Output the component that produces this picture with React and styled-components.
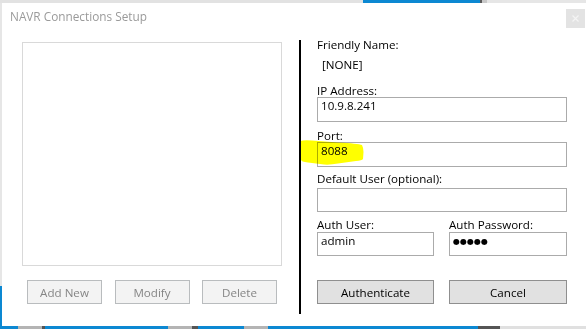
import React from "react";
import styled, { createGlobalStyle } from "styled-components";

const Global = createGlobalStyle`
  html, body { margin: 0; padding: 0; background: #e4e4e4; }
  body { font-family: "Segoe UI", "Open Sans", "Noto Sans", sans-serif; }
`;

const Desktop = styled.div`
  width: 586px;
  height: 329px;
  display: grid;
  grid-template-columns: 2px 584px;
  grid-template-rows: 3px 323px 3px;
  overflow: hidden;
  background: #e4e4e4;
`;

const Strip = styled.div`
  grid-column: 1 / span 2;
  display: flex;
  background: ${(p) => p.$bg};
`;

const Seg = styled.div`
  width: ${(p) => p.$w}px;
  flex: ${(p) => (p.$grow ? 1 : "none")};
  background: ${(p) => p.$c};
`;

const SideStrip = styled.div`
  display: flex;
  flex-direction: column;
  background: #e6e6e6;
`;

const SideBlue = styled.div`
  margin-top: auto;
  height: 40px;
  background: #0c88d2;
`;

const Window = styled.div`
  background: #ffffff;
  display: flex;
  flex-direction: column;
  font-size: 11.6px;
  color: #000;
`;

const TitleBar = styled.div`
  height: 34px;
  display: flex;
  align-items: flex-start;
  justify-content: space-between;
`;

const Title = styled.div`
  padding: 5px 0 0 8px;
  line-height: 16px;
  font-size: 11.8px;
  color: #9a9a9a;
`;

const CloseBtn = styled.div`
  width: 19px;
  height: 19px;
  margin: 6px 1px 0 0;
  background: #e3e3e3;
  display: flex;
  align-items: center;
  justify-content: center;
`;

const Body = styled.div`
  display: flex;
  padding-left: 20px;
`;

const LeftPanel = styled.div`
  width: 260px;
  display: flex;
  flex-direction: column;
  padding-top: 5px;
`;

const ListBox = styled.div`
  height: 224px;
  box-sizing: border-box;
  border: 1px solid #d9d9d9;
  background: #fff;
`;

const ButtonRow = styled.div`
  margin-top: 14px;
  padding: 0 5px;
  display: flex;
  justify-content: space-between;
`;

const Button = styled.div`
  width: ${(p) => p.$w || 75}px;
  height: 24px;
  box-sizing: border-box;
  display: flex;
  align-items: center;
  justify-content: center;
  border: 1px solid ${(p) => (p.$disabled ? "#b9bcbe" : "#8f8f8f")};
  background: ${(p) => (p.$disabled ? "#f3f3f3" : "#e1e1e1")};
  color: ${(p) => (p.$disabled ? "#858585" : "#000")};
`;

const Divider = styled.div`
  width: 2px;
  height: 274px;
  margin: 3px 0 0 17px;
  background: #000;
`;

const RightColumn = styled.div`
  width: 250px;
  margin-left: 16px;
  display: flex;
  flex-direction: column;
`;

const Label = styled.div`
  line-height: 14px;
  height: 14px;
  white-space: nowrap;
  margin-top: ${(p) => p.$mt || 0}px;
  padding-left: ${(p) => p.$pl || 0}px;
  position: relative;
  top: 1px;
`;

const Field = styled.div`
  position: relative;
  margin-top: ${(p) => p.$mt || 0}px;
`;

const TextBox = styled.div`
  height: ${(p) => p.$h || 25}px;
  box-sizing: border-box;
  border: 1px solid #ababab;
  background: #fff;
  padding: 0 3px;
  line-height: 15px;
  white-space: nowrap;
  overflow: hidden;
`;

const Dots = styled.span`
  font-family: "DejaVu Sans", sans-serif;
  font-size: 8px;
  line-height: 15px;
  vertical-align: top;
  position: relative;
  top: 1px;
`;

const AuthGrid = styled.div`
  display: grid;
  grid-template-columns: 117px 118px;
  column-gap: 15px;
  margin-top: ${(p) => p.$mt || 0}px;
`;

const Highlight = styled.svg`
  position: absolute;
  left: -17px;
  top: -2px;
  width: 64px;
  height: 25px;
  pointer-events: none;
  mix-blend-mode: multiply;
`;

export default function App() {
  return (
    <>
      <Global />
      <Desktop>
        <Strip $bg="#e2e2e2">
          <Seg $w={363} $c="#e2e2e2" />
          <Seg $w={117} $c="#0c88d2" />
          <Seg $w={2} $c="#5a5a5a" />
          <Seg $w={5} $c="#c8c8c8" />
          <Seg $grow $c="#e6e6e6" />
        </Strip>
        <SideStrip>
          <SideBlue />
        </SideStrip>
        <Window>
          <TitleBar>
            <Title>NAVR Connections Setup</Title>
            <CloseBtn>
              <svg width="7" height="7" viewBox="0 0 7 7">
                <path d="M0.5 0.5 L6.5 6.5 M6.5 0.5 L0.5 6.5" stroke="#f4f4f4" strokeWidth="1.2" />
              </svg>
            </CloseBtn>
          </TitleBar>
          <Body>
            <LeftPanel>
              <ListBox />
              <ButtonRow>
                <Button $disabled>Add New</Button>
                <Button $disabled>Modify</Button>
                <Button $disabled>Delete</Button>
              </ButtonRow>
            </LeftPanel>
            <Divider />
            <RightColumn>
              <Label>Friendly Name:</Label>
              <Label $mt={6} $pl={5}>[NONE]</Label>
              <Label $mt={12}>IP Address:</Label>
              <Field>
                <TextBox>10.9.8.241</TextBox>
              </Field>
              <Label $mt={6}>Port:</Label>
              <Field>
                <TextBox>8088</TextBox>
                <Highlight viewBox="0 0 64 25">
                  <path
                    d="M0.5,1 Q3,0 12,0.5 L38,2.5 Q58,3.5 62,5 Q63.5,8 63.5,12 L63,19 Q62,20.5 56,21 L38,23.5 Q30,25 24,24.5 L8,22.5 Q1,22 0.5,19 Z"
                    fill="#ffff00"
                  />
                </Highlight>
              </Field>
              <Label $mt={4}>Default User (optional):</Label>
              <Field $mt={3}>
                <TextBox $h={24} />
              </Field>
              <AuthGrid $mt={5}>
                <Label>Auth User:</Label>
                <Label>Auth Password:</Label>
                <Field $mt={1}>
                  <TextBox $h={24}>admin</TextBox>
                </Field>
                <Field $mt={1}>
                  <TextBox $h={24}>
                    <Dots>●●●●●</Dots>
                  </TextBox>
                </Field>
              </AuthGrid>
              <AuthGrid $mt={24}>
                <Button $w={117}>Authenticate</Button>
                <Button $w={118}>Cancel</Button>
              </AuthGrid>
            </RightColumn>
          </Body>
        </Window>
        <Strip $bg="#0c88d2">
          <Seg $w={18} $c="#0c88d2" />
          <Seg $w={24} $c="#b4b4b4" />
          <Seg $w={3} $c="#555" />
          <Seg $w={123} $c="#0c88d2" />
          <Seg $w={24} $c="#b4b4b4" />
          <Seg $w={6} $c="#555" />
          <Seg $w={46} $c="#0c88d2" />
          <Seg $w={24} $c="#b4b4b4" />
          <Seg $w={210} $c="#0c88d2" />
          <Seg $w={22} $c="#555" />
          <Seg $grow $c="#e0e0e0" />
        </Strip>
      </Desktop>
    </>
  );
}
